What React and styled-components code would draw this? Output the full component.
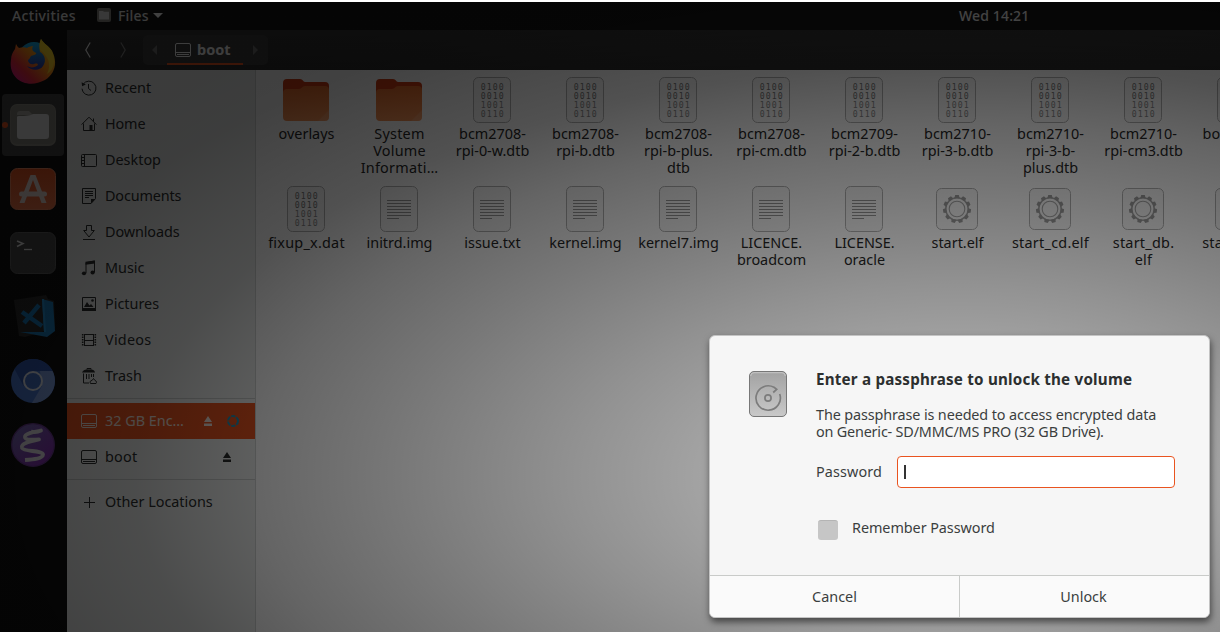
import React from 'react';
import styled, { createGlobalStyle } from 'styled-components';

const GlobalStyle = createGlobalStyle`
  * { box-sizing: border-box; }
  body { margin: 0; background: #000; overflow: hidden; }
`;

const Screen = styled.div`
  position: relative;
  width: 1220px;
  height: 632px;
  overflow: hidden;
  display: flex;
  flex-direction: column;
  background: #0c0c0c;
  border-top: 2px solid #fff;
  font-family: 'Noto Sans', 'Open Sans', sans-serif;
  font-size: 14.4px;
  color: #2a2c2c;
`;

const TopBar = styled.header`
  flex: none;
  height: 28px;
  padding: 0 12px 1px;
  display: grid;
  grid-template-columns: 85px 862px auto;
  align-items: center;
  background: #141414;
  color: #e6e6e6;
  font-size: 14px;
  font-weight: 500;
  white-space: nowrap;
`;

const AppMenu = styled.div`
  display: flex;
  align-items: center;
  letter-spacing: 0.2px;
  svg:first-child { margin-right: 7px; margin-bottom: 2px; }
  svg:last-child { margin-left: 4px; }
`;

const Label = styled.span`
  letter-spacing: ${(p) => p.$track || 0}px;
`;

const Workspace = styled.div`
  flex: 1;
  display: flex;
  min-height: 0;
`;

const Dock = styled.nav`
  flex: none;
  width: 67px;
  padding-left: 2px;
  background: #101010;
  display: flex;
  flex-direction: column;
  gap: 2px;
`;

const DockItem = styled.div`
  position: relative;
  width: 62px;
  height: 62px;
  border-radius: 4px;
  display: flex;
  align-items: center;
  justify-content: center;
  background: ${(p) => (p.$active ? '#444' : 'transparent')};
  svg { display: block; }
`;

const RunningDot = styled.i`
  position: absolute;
  left: 0;
  top: 28px;
  width: 6px;
  height: 6px;
  border-radius: 50%;
  background: #e95420;
`;

const FileWindow = styled.main`
  flex: 1;
  min-width: 0;
  display: flex;
  flex-direction: column;
`;

const HeaderBar = styled.div`
  flex: none;
  height: 40px;
  display: flex;
  align-items: center;
  padding-left: 14px;
  background: linear-gradient(#333, #2b2b2b);
`;

const NavButton = styled.div`
  width: 14px;
  display: flex;
  justify-content: center;
  margin-right: ${(p) => p.$after}px;
`;

const PathBar = styled.div`
  width: 125px;
  height: 30px;
  border-radius: 5px;
  background: #3c3c3c;
  display: flex;
  align-items: center;
  justify-content: space-between;
  padding: 0 10px 0 9px;
`;

const PathSegment = styled.div`
  width: 76px;
  height: 30px;
  padding: 0 8px;
  border-bottom: 2px solid #e95420;
  display: flex;
  align-items: center;
  gap: 6px;
  color: #f4f4f4;
  font-weight: 700;
  font-size: 14.5px;
  svg { position: relative; top: 1px; }
`;

const Body = styled.div`
  flex: 1;
  display: flex;
  min-height: 0;
`;

const Sidebar = styled.aside`
  flex: none;
  width: 189px;
  border-right: 1px solid #cfd2d1;
  background: #eaeceb;
`;

const Place = styled.div`
  height: 36px;
  padding: 0 14px;
  display: flex;
  align-items: center;
  color: ${(p) => (p.$selected ? '#f4e4dd' : '#2b2d2d')};
  background: ${(p) => (p.$selected ? '#e95420' : 'transparent')};
  svg { flex: none; display: block; }
`;

const PlaceName = styled.span`
  flex: 1;
  margin-left: 8px;
  padding-bottom: 2px;
  white-space: nowrap;
  letter-spacing: ${(p) => p.$track || 0}px;
`;

const PlaceActions = styled.span`
  display: flex;
  align-items: center;
  gap: 15px;
  padding-right: ${(p) => p.$inset || 0}px;
`;

const Separator = styled.hr`
  height: 1px;
  margin: 4px 0;
  border: 0;
  background: #c6c9c8;
`;

const FileGrid = styled.section`
  flex: 1;
  min-width: 0;
  overflow: hidden;
  padding: 6px 0 0 4px;
  display: grid;
  grid-template-columns: repeat(11, 93px);
  grid-auto-rows: 109px;
  align-content: start;
  background: #fbfbfb;
`;

const FileCell = styled.figure`
  margin: 0;
  display: flex;
  flex-direction: column;
  align-items: center;
`;

const FileIconBox = styled.div`
  height: 49px;
  padding: 0 2px 2px 0;
  display: flex;
  align-items: center;
  svg { display: block; }
`;

const FileName = styled.figcaption`
  display: flex;
  flex-direction: column;
  align-items: center;
  line-height: 17px;
  white-space: nowrap;
  letter-spacing: ${(p) => p.$track}px;
  color: #262626;
`;

const Vignette = styled.div`
  position: absolute;
  inset: 0;
  background: radial-gradient(
    ellipse 1100px 550px at 960px 475px,
    rgba(0, 0, 0, 0.32) 0%,
    rgba(0, 0, 0, 0.35) 23%,
    rgba(0, 0, 0, 0.42) 35%,
    rgba(0, 0, 0, 0.52) 51%,
    rgba(0, 0, 0, 0.6) 64%,
    rgba(0, 0, 0, 0.68) 75%,
    rgba(0, 0, 0, 0.74) 92%,
    rgba(0, 0, 0, 0.75) 100%
  );
`;

const Dialog = styled.div`
  position: absolute;
  left: 709px;
  top: 333px;
  width: 501px;
  height: 283px;
  border: 1px solid #c4c4c4;
  border-radius: 6px;
  background: #f6f6f6;
  box-shadow: 1px 4px 7px rgba(0, 0, 0, 0.55);
  color: #3b3e3e;
  overflow: hidden;
  display: flex;
  flex-direction: column;
`;

const DialogBody = styled.div`
  flex: 1;
  padding: 35px 34px 0 39px;
  display: flex;
  align-items: flex-start;
`;

const DialogForm = styled.div`
  flex: 1;
  margin: -2px 0 0 29px;
  white-space: nowrap;
`;

const DialogTitle = styled.h1`
  margin: 0;
  font-size: 15.2px;
  line-height: 20px;
  font-weight: 700;
  color: #2c2f2f;
  letter-spacing: ${(p) => p.$track}px;
`;

const DialogText = styled.p`
  margin: 17px 0 16px;
  line-height: 17px;
`;

const TextLine = styled.span`
  display: block;
  letter-spacing: ${(p) => p.$track}px;
`;

const FieldName = styled.span`
  padding-bottom: 1px;
  letter-spacing: 0.1px;
`;

const Field = styled.label`
  display: flex;
  align-items: center;
  justify-content: space-between;
`;

const PasswordInput = styled.span`
  width: 278px;
  height: 32px;
  padding: 8px 6px;
  border: 1px solid #e95420;
  border-radius: 4px;
  background: #fff;
`;

const Caret = styled.i`
  display: block;
  width: 2px;
  height: 14px;
  background: #333;
`;

const Remember = styled.label`
  margin: 30px 0 0 2px;
  display: flex;
  align-items: flex-start;
  gap: 14px;
  line-height: 20px;
  letter-spacing: -0.06px;
`;

const Checkbox = styled.span`
  width: 20px;
  height: 20px;
  margin-top: 2px;
  border-radius: 3px;
  border-top: 1px solid #b4b4b4;
  background: #c6c6c6;
`;

const DialogActions = styled.div`
  flex: none;
  height: 42px;
  display: grid;
  grid-template-columns: 249px 1fr;
  border-top: 1px solid #c9cbc9;
  background: #fafafa;
`;

const DialogButton = styled.div`
  display: flex;
  align-items: center;
  justify-content: center;
  & + & { border-left: 1px solid #c9cbc9; padding-right: 2px; }
`;

const line = { fill: 'none', stroke: 'currentColor', strokeWidth: 1 };

const DriveIcon = () => (
  <svg width="16" height="16" viewBox="0 0 16 16" {...line}>
    <rect x=".5" y="1.5" width="15" height="13" rx="1.5" />
    <path d="M1 10.5h14M2 12.5h12" />
  </svg>
);

const placeIcons = {
  recent: (
    <>
      <path d="M2.2 4.2A7 7 0 1 1 1 8.7M7.5 4v4.5l2.5 2" />
      <path d="M.6 2.2l.5 4 3.7-1.6z" fill="currentColor" stroke="none" />
    </>
  ),
  home: (
    <>
      <path d="M.6 8.6L8 1.2l7.4 7.4M2.5 7.5v7h11v-7M12.500 2.500v3" />
      <path d="M8.500 9h3v6h-3z" fill="currentColor" stroke="none" />
    </>
  ),
  desktop: (
    <>
      <rect x=".5" y="2.500" width="15" height="12" rx="1" />
      <path d="M3.500 3v11M1 5.500h2M1 8.500h2M1 11.500h2" />
    </>
  ),
  documents: (
    <>
      <path d="M1.500.500h13v10l-4.500 5h-8.500zM4 3.500h8M4 5.500h8M4 7.500h8M4 9.500h4" />
      <path d="M10 15.500V11h4.500z" fill="currentColor" stroke="none" />
    </>
  ),
  downloads: <path d="M5.500 1.500h5v5h2.800L8 13 2.700 6.500h2.800zM2 15.500h12" />,
  music: (
    <>
      <path d="M5 13V2.700L13.500 1v11.500" />
      <path d="M4.500 1.800L14 .5v3L4.500 4.800z" fill="currentColor" stroke="none" />
      <ellipse cx="3" cy="13.300" rx="2.100" ry="1.900" fill="currentColor" stroke="none" />
      <ellipse cx="11.600" cy="12.500" rx="2.100" ry="1.900" fill="currentColor" stroke="none" />
    </>
  ),
  pictures: (
    <>
      <path d="M1.500 1.500h13v13h-13z" />
      <path d="M1 12h14v3H1zM3 11l3-5 2.500 3.500L10 8l2.500 3z" fill="currentColor" stroke="none" />
      <circle cx="11.500" cy="4.500" r="1.300" fill="currentColor" stroke="none" />
    </>
  ),
  videos: (
    <>
      <path d="M3.500 2v12M12.500 2v12M3.500 2.500h9M3.500 8.500h9M3.500 13.500h9" />
      <path d="M1.700 2v12M14.300 2v12" strokeWidth="1.600" strokeDasharray="1.500 1" />
    </>
  ),
  trash: (
    <>
      <path d="M2.500 5.500v9.500H8M5.500 6v5M8 6v5M10.500 6v3M6 1.500V.500h4v1" />
      <path d="M1 4.500C2 2 4 1.500 8 1.500s5.500.500 6 3z" fill="currentColor" stroke="none" />
      <path d="M12.500 6v3M9.500 15.500c-1-2 0-3 1.500-3l1.500-2 1.500 2c1.500.500 2 1.500 1 3z" />
    </>
  ),
  other: <path d="M8.500 3v11M3 8.500h11" />,
};

const PlaceIcon = ({ kind }) =>
  kind === 'drive' ? (
    <DriveIcon />
  ) : (
    <svg width="16" height="16" viewBox="0 0 16 16" {...line}>
      {placeIcons[kind]}
    </svg>
  );

const EjectIcon = () => (
  <svg width="8" height="10" viewBox="0 0 8 10" fill="currentColor">
    <path d="M4 0l4 6H0zM0 7.500h8V10H0z" />
  </svg>
);

const SpinnerIcon = () => (
  <svg width="12" height="12" viewBox="0 0 12 12" fill="none" stroke="#1f93b8" strokeWidth="2">
    <circle cx="6" cy="6" r="5" strokeDasharray="4.200 1.080" />
  </svg>
);

const Triangle = ({ dir, color }) => (
  <svg width="5" height="10" viewBox="0 0 5 10" fill={color}>
    <path d={dir === 'left' ? 'M5 0v10L0 5z' : 'M0 0v10l5-5z'} />
  </svg>
);

const Chevron = ({ dir, color }) => (
  <svg width="6" height="16" viewBox="0 0 6 16" fill="none" stroke={color} strokeWidth="1.200">
    <path d={dir === 'left' ? 'M5.200.500L.8 8l4.400 7.500' : 'M.8.500L5.200 8 .8 15.500'} />
  </svg>
);

const FolderIcon = () => (
  <svg width="46" height="42" viewBox="0 0 46 42">
    <defs>
      <linearGradient id="folder" x1="0" y1="0" x2="0" y2="1">
        <stop offset="0" stopColor="#e26a2a" />
        <stop offset="1" stopColor="#f08f54" />
      </linearGradient>
    </defs>
    <path d="M4 0h13c3 0 3 3 5 3h20q4 0 4 4v20H0V4q0-4 4-4z" fill="#cc3a12" />
    <path d="M0 14q0-4 4-4h12c3 0 3-3 6-3h20q4 0 4 4v27q0 4-4 4H4q-4 0-4-4z" fill="url(#folder)" />
    <path d="M46 31v7q0 4-4 4h-7z" fill="#fff" opacity=".12" />
  </svg>
);

const Sheet = ({ w = 38, h = 46, children }) => (
  <svg width={w} height={h} viewBox={`0 0 ${w} ${h}`}>
    <rect x=".5" y=".5" width={w - 1} height={h - 1} rx="5" fill="#f5f5f5" stroke="#afafaf" />
    {children}
  </svg>
);

const BinaryIcon = () => (
  <Sheet>
    <g fontFamily="'DejaVu Sans Mono', monospace" fontSize="8.200" letterSpacing="1.060" fill="#757575">
      {['0100', '0010', '1001', '0110'].map((bits, i) => (
        <text key={i} x="7.800" y={13 + i * 9} opacity={i < 2 ? 1 : 0.85}>{bits}</text>
      ))}
    </g>
  </Sheet>
);

const TextIcon = () => (
  <Sheet>
    <path d="M7 14.500h24M7 17.500h24M7 20.500h24M7 23.500h24M7 26.500h24M7 29.500h24M7 32.500h12" stroke="#949494" />
  </Sheet>
);

const teeth = Array.from({ length: 11 }, (_, i) => (i * 360) / 11);

const GearIcon = () => (
  <Sheet w={42} h={42}>
    <g fill="none" stroke="#a4a4a4">
      <circle cx="21" cy="21" r="11.200" strokeWidth="1.500" />
      <circle cx="21" cy="21" r="7.800" strokeWidth="1.100" />
    </g>
    <g fill="#9a9a9a">
      {teeth.map((a) => (
        <path key={a} d="M19.200 7h3.600l.8 3.300h-5.200z" transform={`rotate(${a} 21 21)`} />
      ))}
    </g>
  </Sheet>
);

const fileIcons = { folder: FolderIcon, binary: BinaryIcon, text: TextIcon, exec: GearIcon };

const DiskIcon = () => (
  <svg width="38" height="46" viewBox="0 0 38 46">
    <defs>
      <linearGradient id="disk" x1="0" y1="0" x2="0" y2="1">
        <stop offset="0" stopColor="#a2a2a2" />
        <stop offset="1" stopColor="#c9c9c9" />
      </linearGradient>
    </defs>
    <rect x=".5" y=".5" width="37" height="45" rx="4.500" fill="url(#disk)" stroke="#777" />
    <path d="M1.700 5q0-3.300 3.300-3.300h28q3.300 0 3.300 3.300" fill="none" stroke="#c6c6c6" />
    <g fill="none" stroke="#7c7c7c" strokeWidth="1.700">
      <path d="M30.700 23A12.200 12.200 0 1 1 25 16.300l2.700 2-3.500 3.200" />
      <circle cx="19" cy="27" r="3.100" />
    </g>
  </svg>
);

const MiniFiles = () => (
  <svg width="14" height="14" viewBox="0 0 14 14">
    <rect width="14" height="14" rx="2" fill="#8b8982" />
    <path d="M2 3h4l1 .8h5v7.700H2z" fill="#dedede" />
  </svg>
);

const FirefoxIcon = () => (
  <svg width="46" height="46" viewBox="0 0 46 46">
    <defs>
      <linearGradient id="fox" x1=".9" y1=".1" x2=".1" y2=".9">
        <stop offset="0" stopColor="#ffe226" />
        <stop offset=".45" stopColor="#ff8a16" />
        <stop offset=".75" stopColor="#f52d3d" />
        <stop offset="1" stopColor="#e01b84" />
      </linearGradient>
      <linearGradient id="globe" x1="0" y1="0" x2="0" y2="1">
        <stop offset="0" stopColor="#12b4e8" />
        <stop offset="1" stopColor="#37219b" />
      </linearGradient>
    </defs>
    <circle cx="24" cy="20" r="16" fill="url(#globe)" />
    <path d="M6 6c1 2 2 3 3 4 3-1 6-1 8 0 1-1 4-2 6-2-1 2-1 3 0 5l3 2c1 1-1 2-5 3-1 1-1 3-3 4 0 3 3 5 6 4 3-1 4 0 4 1-3 3-8 3-11 1 4 5 13 5 16 0 4-6 1-12-3-14-1-5-1-9 1-13 3 5 8 7 11 12 6 11 3 23-7 29C16 52-2 40 1 22c0-5 2-8 4-11z" fill="url(#fox)" />
    <path d="M31 1c3 5 8 7 11 12 4 10 2 19-5 23 5-10 1-18-7-24-1-4 0-8 1-11z" fill="#ffe12c" opacity=".75" />
  </svg>
);

const FilesIcon = () => (
  <svg width="46" height="42" viewBox="0 0 46 42">
    <rect width="46" height="42" rx="7" fill="#8f8d84" />
    <rect x="1" y="1" width="44" height="39" rx="6" fill="#85837a" />
    <path d="M7 10q0-3 3-3h9l4 4H7z" fill="#aeada7" />
    <path d="M7 13q0-1 2-1 11 0 14-2h13q3 0 3 3v19q0 3-3 3H10q-3 0-3-3z" fill="#e2e2e2" />
  </svg>
);

const SoftwareIcon = () => (
  <svg width="46" height="42" viewBox="0 0 46 42">
    <defs>
      <linearGradient id="soft" x1="0" y1="0" x2="0" y2="1">
        <stop offset="0" stopColor="#e95420" />
        <stop offset="1" stopColor="#f0764a" />
      </linearGradient>
    </defs>
    <rect x=".5" y=".5" width="45" height="41" rx="7" fill="url(#soft)" stroke="#f0875f" />
    <path d="M9.500 35L20.500 7h5L36.500 35h-5L23 12 14.500 35z" fill="#ecdcd5" />
    <path d="M11.500 26h23" stroke="#ecdcd5" strokeWidth="5" strokeLinecap="round" />
  </svg>
);

const TerminalIcon = () => (
  <svg width="46" height="42" viewBox="0 0 46 42">
    <rect x=".5" y=".5" width="45" height="41" rx="7" fill="#4a4a4a" stroke="#606060" />
    <path d="M7 9l6 2.500L7 14.500" fill="none" stroke="#e6e6e6" strokeWidth="1.500" />
    <path d="M14 17.500h8" stroke="#e6e6e6" strokeWidth="1.300" />
  </svg>
);

const CodeIcon = () => (
  <svg width="46" height="50" viewBox="0 0 46 50">
    <path d="M4 8L36 3l2 4 6 2 1 27-30 9-6-1z" fill="#2b2b2b" />
    <path d="M32 7l11 3 2 29-8 6-27-5 24 0z" fill="#1b7ab8" />
    <path d="M12 20l20 14M29 13L14 31" fill="none" stroke="#1878b8" strokeWidth="4.500" />
    <path d="M33 7l2 33" stroke="#2590d2" strokeWidth="2" />
  </svg>
);

const ChromiumIcon = () => (
  <svg width="44" height="44" viewBox="0 0 44 44">
    <circle cx="22" cy="22" r="22" fill="#4a78cf" />
    <path d="M3.500 10A22 22 0 0 1 41.500 12H22L12.500 27z" fill="#2f56ad" />
    <path d="M41.500 12A22 22 0 0 1 21 44L31 27l-2-15z" fill="#7f9fe0" />
    <circle cx="22" cy="22" r="10" fill="#dfe4ee" />
    <circle cx="22" cy="22" r="8" fill="#4470c4" />
  </svg>
);

const EmacsIcon = () => (
  <svg width="44" height="44" viewBox="0 0 44 44">
    <defs>
      <linearGradient id="emacs" x1="0" y1="0" x2="1" y2="1">
        <stop offset="0" stopColor="#7673b8" />
        <stop offset="1" stopColor="#8a24b4" />
      </linearGradient>
    </defs>
    <circle cx="22" cy="22" r="21.300" fill="url(#emacs)" stroke="#6a3a92" strokeWidth="1.300" />
    <path d="M20 8.500c4 1 7 .5 10-1-6 1-17 3-16 7 1 3 9 2 14 2-9 2-19 4-17 8.500 2 4 20 2 21 6.500 0 4-10 5-18 5.500" fill="none" stroke="#e6e4ea" strokeWidth="3.800" strokeLinejoin="round" />
  </svg>
);

const dockApps = [FirefoxIcon, FilesIcon, SoftwareIcon, TerminalIcon, CodeIcon, ChromiumIcon, EmacsIcon];

const places = [
  ['recent', 'Recent'],
  ['home', 'Home', -0.15],
  ['desktop', 'Desktop'],
  ['documents', 'Documents', -0.15],
  ['downloads', 'Downloads', -0.1],
  ['music', 'Music'],
  ['pictures', 'Pictures'],
  ['videos', 'Videos', 0.25],
  ['trash', 'Trash'],
];

const files = [
  ['folder', 'overlays'],
  ['folder', 'System', 'Volume', 'Informati…'],
  ['binary', 'bcm2708-', 'rpi-0-w.dtb'],
  ['binary', 'bcm2708-', 'rpi-b.dtb'],
  ['binary', 'bcm2708-', 'rpi-b-plus.', 'dtb'],
  ['binary', 'bcm2708-', 'rpi-cm.dtb'],
  ['binary', 'bcm2709-', 'rpi-2-b.dtb'],
  ['binary', 'bcm2710-', 'rpi-3-b.dtb'],
  ['binary', 'bcm2710-', 'rpi-3-b-', 'plus.dtb'],
  ['binary', 'bcm2710-', 'rpi-cm3.dtb'],
  ['binary', 'bootcode.'],
  ['binary', 'fixup_x.dat'],
  ['text', 'initrd.img'],
  ['text', 'issue.txt'],
  ['text', 'kernel.img'],
  ['text', 'kernel7.img'],
  ['text', 'LICENCE.', 'broadcom'],
  ['text', 'LICENSE.', 'oracle'],
  ['exec', 'start.elf'],
  ['exec', 'start_cd.elf'],
  ['exec', 'start_db.', 'elf'],
  ['exec', 'start_x.elf'],
];

export default function App() {
  return (
    <>
      <GlobalStyle />
      <Screen>
        <TopBar>
          <Label $track={0.35}>Activities</Label>
          <AppMenu>
            <MiniFiles />
            Files
            <svg width="10" height="5" viewBox="0 0 10 5" fill="#fff"><path d="M0 0h10L5 5z" /></svg>
          </AppMenu>
          <Label $track={0.15}>Wed 14:21</Label>
        </TopBar>
        <Workspace>
          <Dock>
            {dockApps.map((Icon, i) => (
              <DockItem key={i} $active={i === 1}>
                {i === 1 && <RunningDot />}
                <Icon />
              </DockItem>
            ))}
          </Dock>
          <FileWindow>
            <HeaderBar>
              <NavButton $after={21}><Chevron dir="left" color="#f0f0f0" /></NavButton>
              <NavButton $after={13}><Chevron dir="right" color="#808080" /></NavButton>
              <PathBar>
                <Triangle dir="left" color="#6e6e6e" />
                <PathSegment><DriveIcon />boot</PathSegment>
                <Triangle dir="right" color="#6e6e6e" />
              </PathBar>
            </HeaderBar>
            <Body>
              <Sidebar>
                {places.map(([kind, name, track]) => (
                  <Place key={kind}>
                    <PlaceIcon kind={kind} />
                    <PlaceName $track={track}>{name}</PlaceName>
                  </Place>
                ))}
                <Separator />
                <Place $selected>
                  <PlaceIcon kind="drive" />
                  <PlaceName>32 GB Enc…</PlaceName>
                  <PlaceActions $inset={2}><EjectIcon /><SpinnerIcon /></PlaceActions>
                </Place>
                <Place>
                  <PlaceIcon kind="drive" />
                  <PlaceName $track={0.25}>boot</PlaceName>
                  <PlaceActions $inset={10}><EjectIcon /></PlaceActions>
                </Place>
                <Separator />
                <Place>
                  <PlaceIcon kind="other" />
                  <PlaceName>Other Locations</PlaceName>
                </Place>
              </Sidebar>
              <FileGrid>
                {files.map(([kind, ...lines], i) => {
                  const Icon = fileIcons[kind];
                  return (
                    <FileCell key={i}>
                      <FileIconBox><Icon /></FileIconBox>
                      <FileName $track={/_|…/.test(lines.join('')) ? 0.25 : 0}>
                        {lines.map((t) => <span key={t}>{t}</span>)}
                      </FileName>
                    </FileCell>
                  );
                })}
              </FileGrid>
            </Body>
          </FileWindow>
        </Workspace>
        <Vignette />
        <Dialog>
          <DialogBody>
            <DiskIcon />
            <DialogForm>
              <DialogTitle $track={0.2}>Enter a passphrase to unlock the volume</DialogTitle>
              <DialogText>
                <TextLine $track={-0.12}>The passphrase is needed to access encrypted data</TextLine>
                <TextLine $track={-0.19}>on Generic- SD/MMC/MS PRO (32 GB Drive).</TextLine>
              </DialogText>
              <Field>
                <FieldName>Password</FieldName>
                <PasswordInput><Caret /></PasswordInput>
              </Field>
              <Remember><Checkbox />Remember Password</Remember>
            </DialogForm>
          </DialogBody>
          <DialogActions>
            <DialogButton>Cancel</DialogButton>
            <DialogButton>Unlock</DialogButton>
          </DialogActions>
        </Dialog>
      </Screen>
    </>
  );
}
